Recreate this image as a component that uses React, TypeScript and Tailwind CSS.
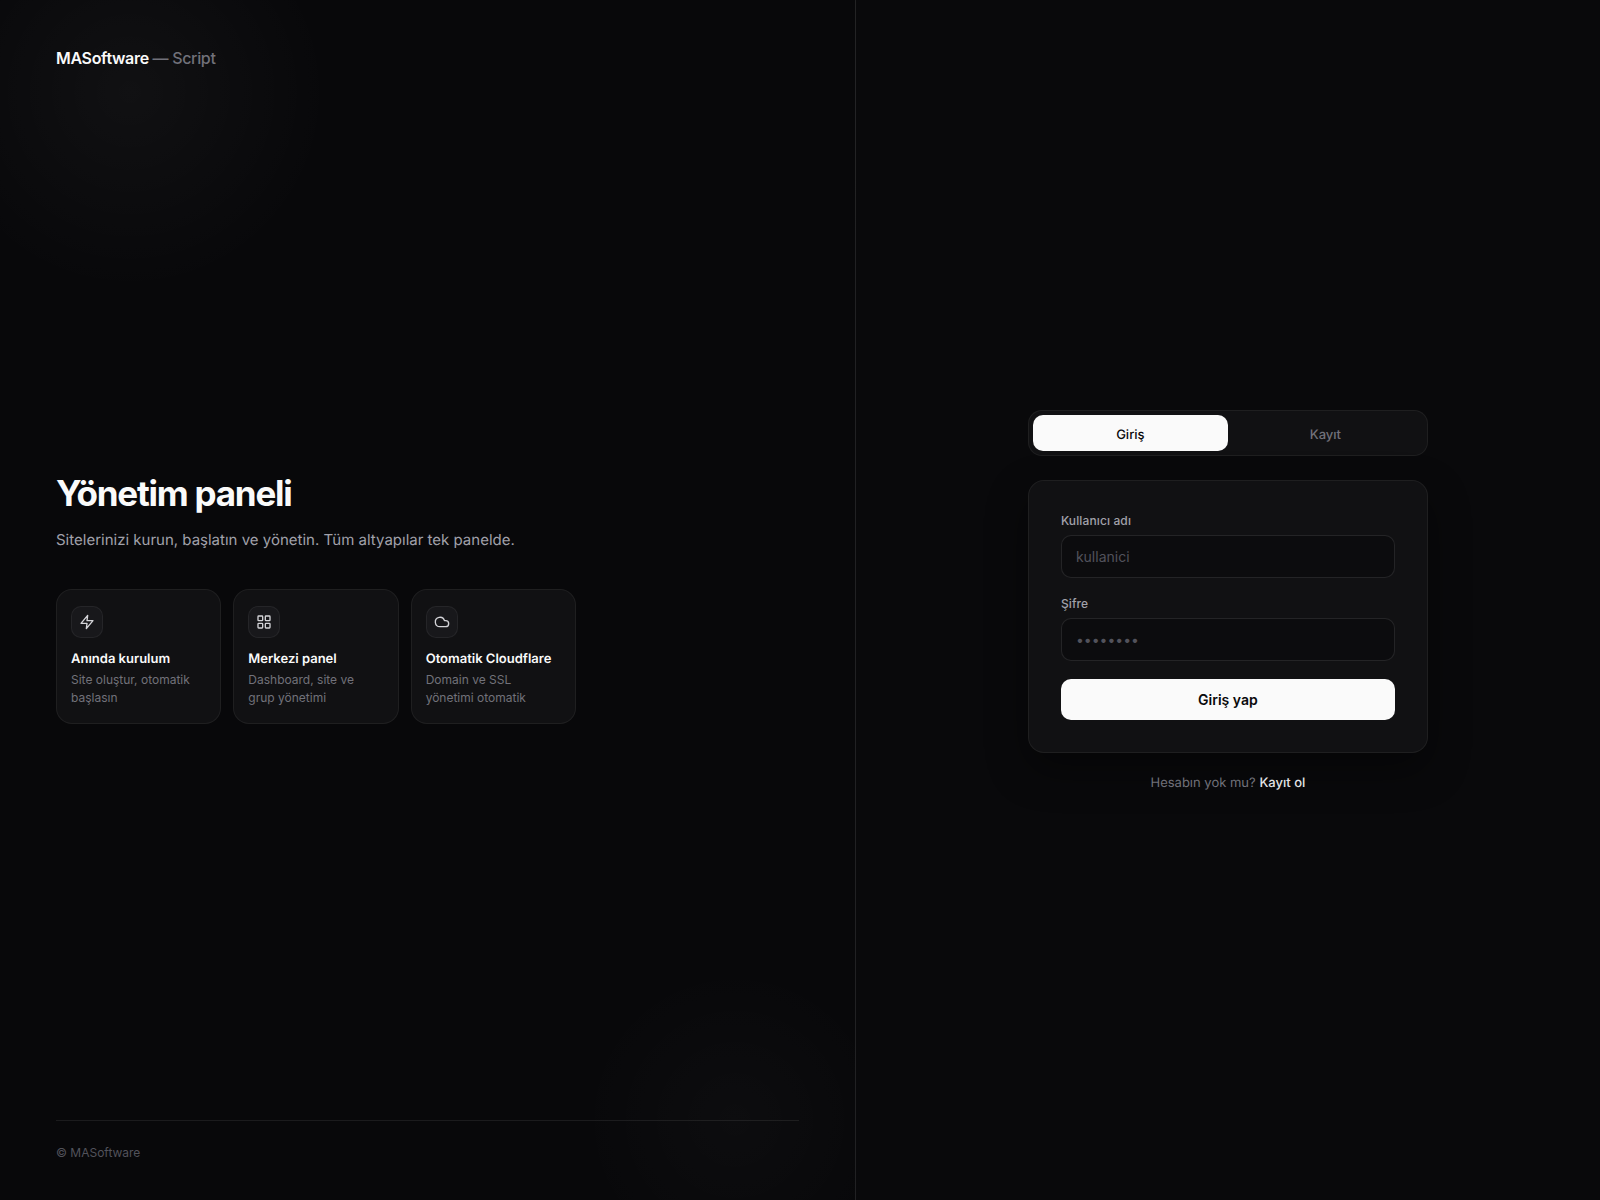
import { useState, type ReactNode } from "react";

function Icon({ children }: { children: ReactNode }) {
  return (
    <svg
      viewBox="0 0 24 24"
      fill="none"
      stroke="currentColor"
      strokeWidth="2"
      strokeLinecap="round"
      strokeLinejoin="round"
      aria-hidden="true"
      className="size-4"
    >
      {children}
    </svg>
  );
}

const features = [
  {
    title: "Anında kurulum",
    text: "Site oluştur, otomatik başlasın",
    icon: <path d="M13 2 3 14h9l-1 8 10-12h-9l1-8z" />,
  },
  {
    title: "Merkezi panel",
    text: "Dashboard, site ve grup yönetimi",
    icon: (
      <>
        <rect x="3" y="3" width="7" height="7" rx="1" />
        <rect x="14" y="3" width="7" height="7" rx="1" />
        <rect x="3" y="14" width="7" height="7" rx="1" />
        <rect x="14" y="14" width="7" height="7" rx="1" />
      </>
    ),
  },
  {
    title: "Otomatik Cloudflare",
    text: "Domain ve SSL yönetimi otomatik",
    icon: <path d="M17.5 19H9a7 7 0 1 1 6.71-9h1.79a4.5 4.5 0 1 1 0 9Z" />,
  },
];

function Field({ id, label, type, placeholder }: { id: string; label: string; type: string; placeholder: string }) {
  return (
    <div className="flex flex-col gap-1.5">
      <label htmlFor={id} className="text-xs font-medium leading-4 tracking-[0.01em] text-[#a1a1aa]">
        {label}
      </label>
      <input
        id={id}
        type={type}
        placeholder={placeholder}
        className="h-[43px] w-full rounded-[10px] border border-white/10 bg-[#0c0c0e] px-3.5 text-sm text-[#fafafa] outline-none placeholder:text-[#52525b] focus:border-white/25"
      />
    </div>
  );
}

function Tab({ label, selected, onSelect }: { label: string; selected: boolean; onSelect: () => void }) {
  return (
    <button
      type="button"
      role="tab"
      aria-selected={selected}
      onClick={onSelect}
      className={`h-9 rounded-[10px] pt-1 text-[13px] leading-5 font-medium [text-rendering:geometricPrecision] ${
        selected ? "bg-[#fafafa] text-[#09090b]" : "text-[#71717a]"
      }`}
    >
      {label}
    </button>
  );
}

export default function App() {
  const [tab, setTab] = useState<"login" | "register">("login");

  return (
    <div className="grid min-h-screen grid-cols-[1.15fr_1fr] bg-[#08080a] font-['Inter',sans-serif] text-[#fafafa]">
      <section className="flex flex-col border-r border-white/10 bg-[radial-gradient(circle_at_130px_92px,rgba(255,255,255,0.035),transparent_200px),radial-gradient(circle_at_calc(100%-120px)_calc(100%-80px),rgba(255,255,255,0.02),transparent_156px)] px-14 pt-12 pb-10">
        <header className="text-base font-semibold leading-5 tracking-[-0.02em]">
          MASoftware <span className="font-medium text-[#71717a]">— Script</span>
        </header>

        <main className="flex flex-1 flex-col justify-center pt-2.5">
          <h1 className="text-[35px] font-bold leading-[38px] tracking-[-0.035em]">Yönetim paneli</h1>
          <p className="mt-4 text-[15px] leading-[23px] text-[#a1a1aa] [text-rendering:geometricPrecision]">
            Sitelerinizi kurun, başlatın ve yönetin. Tüm altyapılar tek panelde.
          </p>
          <ul className="mt-[38px] grid max-w-[520px] grid-cols-3 gap-3">
            {features.map((f) => (
              <li key={f.title} className="rounded-2xl border border-white/6 bg-[#111113] px-3.5 py-4">
                <div className="flex size-8 items-center justify-center rounded-[10px] border border-white/6 bg-[#18181b] text-[#d4d4d8]">
                  <Icon>{f.icon}</Icon>
                </div>
                <h2 className="mt-3 text-[13px] font-semibold leading-[19px] whitespace-nowrap [text-rendering:geometricPrecision]">
                  {f.title}
                </h2>
                <p className="mt-0.5 text-xs leading-[18px] text-[#71717a]">{f.text}</p>
              </li>
            ))}
          </ul>
        </main>

        <footer className="border-t border-white/8 pt-6 text-xs leading-[15px] text-[#52525b]">© MASoftware</footer>
      </section>

      <section className="flex items-center justify-center bg-[#09090b] px-6">
        <div className="w-full max-w-[400px]">
          <div role="tablist" className="grid grid-cols-2 rounded-[14px] border border-white/6 bg-[#111113] p-1">
            <Tab label="Giriş" selected={tab === "login"} onSelect={() => setTab("login")} />
            <Tab label="Kayıt" selected={tab === "register"} onSelect={() => setTab("register")} />
          </div>

          <form
            onSubmit={(e) => e.preventDefault()}
            className="mt-6 flex flex-col gap-[18px] rounded-2xl border border-white/6 bg-[#111113] p-8 shadow-[0_16px_40px_rgba(0,0,0,0.4)]"
          >
            <Field id="username" label="Kullanıcı adı" type="text" placeholder="kullanici" />
            <Field id="password" label="Şifre" type="password" placeholder="••••••••" />
            <button type="submit" className="h-[41px] rounded-[10px] bg-[#fafafa] text-sm font-semibold text-[#09090b]">
              Giriş yap
            </button>
          </form>

          <p className="mt-6 text-center text-[13px] leading-[13px] text-[#71717a] [text-rendering:geometricPrecision]">
            Hesabın yok mu?{" "}
            <a href="#kayit" onClick={() => setTab("register")} className="font-medium text-[#e4e4e7]">
              Kayıt ol
            </a>
          </p>
        </div>
      </section>
    </div>
  );
}
